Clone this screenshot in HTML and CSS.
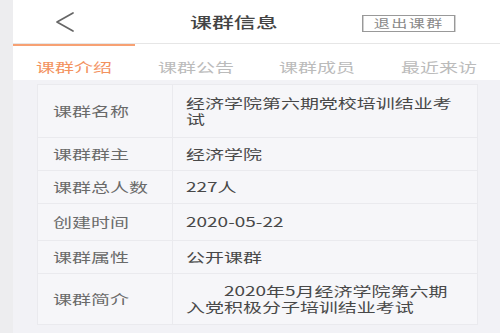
FILE: index.html
```html
<!DOCTYPE html>
<html lang="zh-CN">
<head>
<meta charset="utf-8">
<title>课群信息</title>
<link rel="stylesheet" href="styles.css">
</head>
<body>
<div class="app">
  <header class="header">
    <span class="back" aria-label="返回">
      <svg width="20" height="22" viewBox="0 0 20 22"><path d="M18 2 L2 11 L18 20" fill="none" stroke="#666" stroke-width="1.7" stroke-linecap="round" stroke-linejoin="round"/></svg>
    </span>
    <h1 class="title"><span class="sx">课群信息</span></h1>
    <div class="quit">退出课群</div>
  </header>
  <nav class="tabs">
    <div class="tab active"><span class="sx sxc">课群介绍</span></div>
    <div class="tab"><span class="sx sxc">课群公告</span></div>
    <div class="tab"><span class="sx sxc">课群成员</span></div>
    <div class="tab"><span class="sx sxc">最近来访</span></div>
  </nav>
  <main class="content">
    <table class="info">
      <tr class="row-tall">
        <td class="label"><span class="sx">课群名称</span></td>
        <td class="value"><div class="vtext">经济学院第六期党校培训结业考试</div></td>
      </tr>
      <tr class="row">
        <td class="label"><span class="sx">课群群主</span></td>
        <td class="value"><div class="vtext">经济学院</div></td>
      </tr>
      <tr class="row">
        <td class="label"><span class="sx">课群总人数</span></td>
        <td class="value"><div class="vtext">227人</div></td>
      </tr>
      <tr class="row-mid">
        <td class="label"><span class="sx">创建时间</span></td>
        <td class="value"><div class="vtext">2020-05-22</div></td>
      </tr>
      <tr class="row">
        <td class="label"><span class="sx">课群属性</span></td>
        <td class="value"><div class="vtext">公开课群</div></td>
      </tr>
      <tr class="row-last">
        <td class="label"><span class="sx">课群简介</span></td>
        <td class="value"><div class="vtext indent">2020年5月经济学院第六期入党积极分子培训结业考试</div></td>
      </tr>
    </table>
  </main>
</div>
</body>
</html>
```
FILE: styles.css
```css
* { box-sizing: border-box; }
html, body { margin: 0; padding: 0; }
body {
  background: #ededef;
  font-family: "Noto Sans CJK SC", "Noto Sans", sans-serif;
  width: 500px;
  height: 333px;
  overflow: hidden;
}
.app {
  margin-left: 13px;
  height: 333px;
  background: #f2f2f6;
}
.sx {
  display: inline-block;
  transform: scaleX(1.46);
  transform-origin: left center;
  white-space: nowrap;
}
.sxc { transform-origin: center center; }

.header {
  height: 44px;
  background: #fff;
  border-bottom: 1px solid #e6e6e6;
  display: flex;
  align-items: center;
}
.back {
  display: flex;
  margin-left: 42px;
  width: 20px;
  height: 22px;
}
.title {
  margin: 0 0 0 115px;
  width: 60px;
  font-size: 15px;
  font-weight: 500;
  line-height: 20px;
  color: #444;
}
.quit {
  margin-left: 112px;
  margin-top: 3px;
  width: 64px;
  height: 17px;
  border: 1px solid #999;
  font-size: 11px;
  line-height: 15px;
  text-align: center;
  color: #888;
  letter-spacing: 1px;
  transform: scaleX(1.46);
  transform-origin: left center;
}

.tabs {
  display: flex;
  height: 36px;
  background: #fff;
}
.tab {
  flex: 1;
  display: flex;
  justify-content: center;
  align-items: center;
  padding-top: 6px;
  border-top: 2px solid transparent;
  font-size: 13px;
  color: #bbb;
}
.tab.active {
  border-top-color: #f7a173;
  color: #f3925f;
}

.content {
  padding: 4px 22px 0 24px;
}
.info {
  width: 100%;
  border-collapse: collapse;
  background: #f6f6f9;
}
.info td {
  border: 1px solid #eaeaee;
  padding: 0;
  vertical-align: middle;
  font-size: 13px;
  line-height: 16px;
}
.row-tall { height: 53px; }
.row { height: 33px; }
.row-mid { height: 37px; }
.row-last { height: 51px; }
.label {
  width: 135px;
  padding-left: 15px !important;
  color: #6a6a6a;
}
.value {
  padding-left: 13px !important;
  color: #484848;
}
.vtext {
  width: 188px;
  transform: scaleX(1.46);
  transform-origin: left center;
}
.indent { text-indent: 2em; }
```
